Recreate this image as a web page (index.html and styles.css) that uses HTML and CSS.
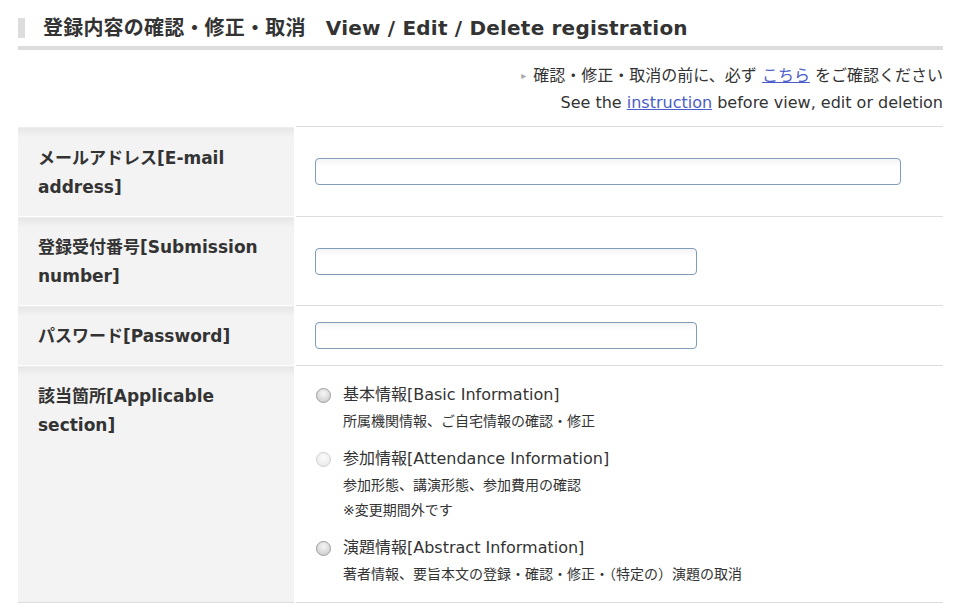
FILE: index.html
```html
<!DOCTYPE html>
<html lang="ja">
<head>
<meta charset="utf-8">
<title>登録内容の確認・修正・取消</title>
<link rel="stylesheet" href="styles.css">
</head>
<body>
<div class="page">
  <h1 class="title">登録内容の確認・修正・取消　View / Edit / Delete registration</h1>
  <div class="notice">
    <p><span class="arrow">&#9656;</span> 確認・修正・取消の前に、必ず <a href="#">こちら</a> をご確認ください</p>
    <p>See the <a href="#">instruction</a> before view, edit or deletion</p>
  </div>
  <table class="form">
    <tr>
      <th>メールアドレス[E-mail address]</th>
      <td class="mid"><input type="text" class="inp wide"></td>
    </tr>
    <tr>
      <th>登録受付番号[Submission number]</th>
      <td class="mid"><input type="text" class="inp"></td>
    </tr>
    <tr>
      <th>パスワード[Password]</th>
      <td class="mid"><input type="password" class="inp"></td>
    </tr>
    <tr>
      <th>該当箇所[Applicable section]</th>
      <td class="opts">
        <div class="opt">
          <label class="opt-label"><input type="radio" name="sec" class="radio"> 基本情報[Basic Information]</label>
          <div class="sub">所属機関情報、ご自宅情報の確認・修正</div>
        </div>
        <div class="opt">
          <label class="opt-label"><input type="radio" name="sec" class="radio" disabled> 参加情報[Attendance Information]</label>
          <div class="sub">参加形態、講演形態、参加費用の確認</div>
          <div class="sub">※変更期間外です</div>
        </div>
        <div class="opt">
          <label class="opt-label"><input type="radio" name="sec" class="radio"> 演題情報[Abstract Information]</label>
          <div class="sub">著者情報、要旨本文の登録・確認・修正・（特定の）演題の取消</div>
        </div>
      </td>
    </tr>
  </table>
</div>
</body>
</html>
```

FILE: styles.css
```css
* { box-sizing: border-box; }
html, body { margin: 0; padding: 0; background: #fff; }
body {
  font-family: "DejaVu Sans", "Noto Sans CJK JP", sans-serif;
  color: #333;
}
.page {
  padding: 18px 14px 0 18px;
}
.title {
  margin: 0;
  font-size: 20px;
  font-weight: bold;
  line-height: 21px;
  padding: 0 0 7px 25px;
  border-bottom: 4px solid #ddd;
  color: #333;
  letter-spacing: 0.2px;
  background: linear-gradient(#ddd, #ddd) no-repeat 0 -1px / 7px 21px;
}
.notice {
  text-align: right;
  font-size: 16px;
  line-height: 27px;
  padding: 12px 0 10px;
}
.notice p { margin: 0; }
.notice a { color: #4b5dc8; text-decoration: underline; }
.arrow { color: #aaa; font-size: 10px; vertical-align: 2px; margin-right: 2px; }
.form {
  width: 100%;
  border-collapse: collapse;
  border-top: 1px solid #ddd;
}
.form tr { border-bottom: 1px solid #ddd; }
.form th {
  width: 277px;
  text-align: left;
  vertical-align: top;
  font-size: 17px;
  line-height: 29px;
  font-weight: bold;
  padding: 16px 20px 14px 20px;
  background: #f3f3f3 linear-gradient(#e6e6e6, #f3f3f3 10px);
  border-right: 2px solid #fff;
  border-top: 1px solid #fff;
}
.form tr:first-child th { padding-top: 17px; }
.form td { padding: 0 19px; }
.form td.mid { vertical-align: middle; }
.inp {
  display: block;
  width: 382px;
  height: 27px;
  border: 1px solid #7f9cba;
  border-radius: 4px;
  background: linear-gradient(#f4f4f4, #fff 8px);
  font: inherit;
}
.inp.wide { width: 586px; }
.opts { vertical-align: top; padding: 16px 19px 15px !important; }
.opt + .opt { margin-top: 12px; }
.opt-label {
  display: flex;
  align-items: center;
  font-size: 16px;
  line-height: 26px;
  color: #333;
}
.radio {
  -webkit-appearance: none;
  appearance: none;
  margin: 0 12px 0 1px;
  width: 15px;
  height: 15px;
  flex: none;
  border-radius: 50%;
  border: 1px solid #9d9d9d;
  background: radial-gradient(circle at 50% 35%, #f6f6f6, #d0d0d0 80%);
}
.radio:disabled {
  border-color: #d0d0d0;
  background: radial-gradient(circle at 50% 35%, #fbfbfb, #eaeaea 80%);
}
.sub {
  font-size: 14px;
  line-height: 25px;
  padding-left: 28px;
  color: #333;
}
.opt-label + .sub { margin-top: 1px; }
```
